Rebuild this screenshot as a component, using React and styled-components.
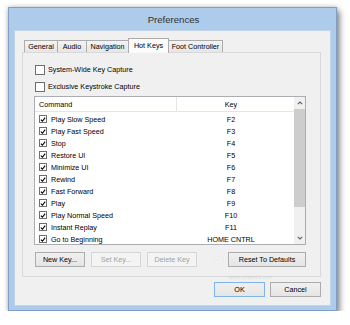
import React from "react";
import styled, { createGlobalStyle, css } from "styled-components";

const GlobalStyle = createGlobalStyle`
  html, body {
    margin: 0;
    padding: 0;
    background: #ffffff;
  }
  body {
    font-family: "Liberation Sans", Arial, sans-serif;
    font-size: 7.2px;
    color: #000;
  }
`;

const Page = styled.div`
  padding: 7px 0 0 8px;
`;

const Window = styled.div`
  position: relative;
  width: 329px;
  height: 304px;
  box-sizing: border-box;
  background: #adcbeb;
  border: 1px solid #7f9fc6;
  box-shadow: 0 0 5px rgba(0, 0, 0, 0.25), 3px 4px 6px rgba(0, 0, 0, 0.4);
  display: flex;
  flex-direction: column;
`;

const TitleBar = styled.div`
  height: 22px;
  display: flex;
  align-items: center;
  justify-content: center;
  font-size: 9.6px;
  color: #333;
  padding-left: 2px;
`;

const Client = styled.div`
  margin: 0 5px;
  height: 276px;
  box-sizing: border-box;
  background: #f0f0f0;
  border: 1px solid #c3d4e8;
  padding: 7px 9px 0 7px;
  display: flex;
  flex-direction: column;
`;

const TabStrip = styled.div`
  display: flex;
  align-items: flex-end;
  height: 14px;
  padding-left: 2px;
  position: relative;
  z-index: 1;
`;

const Tab = styled.div`
  width: ${p => p.$w}px;
  height: ${p => (p.$active ? 15 : 12)}px;
  margin-bottom: ${p => (p.$active ? -1 : 0)}px;
  margin-left: -1px;
  &:first-child {
    margin-left: 0;
  }
  box-sizing: border-box;
  border: 1px solid #acacac;
  border-bottom: none;
  display: flex;
  align-items: center;
  justify-content: center;
  padding-bottom: ${p => (p.$active ? 2 : 0)}px;
  background: ${p => (p.$active ? "#fbfbfb" : "linear-gradient(#f3f3f3, #e6e6e6)")};
  position: relative;
  z-index: ${p => (p.$active ? 2 : 1)};
`;

const Panel = styled.div`
  height: 225px;
  box-sizing: border-box;
  border: 1px solid #d9d9d9;
  background: #f0f0f0;
  padding: 8px 14px 0 11px;
  display: flex;
  flex-direction: column;
`;

const CheckRow = styled.label`
  height: 17px;
  display: flex;
  align-items: center;
  gap: 3px;
  padding-left: 1px;
`;

const Box = styled.span`
  width: ${p => p.$size}px;
  height: ${p => p.$size}px;
  box-sizing: border-box;
  border: 1px solid #6f6f6f;
  background: #fff;
  display: inline-flex;
  align-items: center;
  justify-content: center;
  flex: none;
`;

const ListView = styled.div`
  margin-top: 1px;
  height: 149px;
  box-sizing: border-box;
  border: 1px solid #abadb3;
  background: #fff;
  display: flex;
`;

const ListBody = styled.div`
  flex: 1;
  display: flex;
  flex-direction: column;
  overflow: hidden;
`;

const Header = styled.div`
  height: 15px;
  flex: none;
  display: flex;
  box-sizing: border-box;
  border-bottom: 1px solid #e5e5e5;
`;

const cmdCol = css`
  width: 142px;
  box-sizing: border-box;
  padding-left: 4px;
  display: flex;
  align-items: center;
`;

const keyCol = css`
  width: 108px;
  display: flex;
  align-items: center;
  justify-content: center;
`;

const HeadCmd = styled.div`
  ${cmdCol};
  border-right: 1px solid #e5e5e5;
`;

const HeadKey = styled.div`
  ${keyCol};
`;

const Rows = styled.div`
  padding-top: 1px;
`;

const Row = styled.div`
  height: 12px;
  display: flex;
  align-items: center;
`;

const CmdCell = styled.div`
  ${cmdCol};
  gap: 4px;
`;

const KeyCell = styled.div`
  ${keyCol};
`;

const PeekRow = styled.div`
  height: 2px;
  padding-left: 4px;
  display: flex;
  align-items: flex-start;
`;

const PeekBox = styled.span`
  width: 8px;
  height: 2px;
  box-sizing: border-box;
  border: 1px solid #6f6f6f;
  border-bottom: none;
`;

const ScrollBar = styled.div`
  width: 11px;
  flex: none;
  background: #f0f0f0;
  display: flex;
  flex-direction: column;
`;

const ScrollBtn = styled.div`
  height: 12px;
  display: flex;
  align-items: center;
  justify-content: center;
`;

const Thumb = styled.div`
  height: 98px;
  background: #cdcdcd;
`;

const Track = styled.div`
  flex: 1;
`;

const ButtonRow = styled.div`
  margin-top: 7px;
  display: flex;
  gap: 6px;
  padding-left: 1px;
  position: relative;
  z-index: 2;
`;

const Button = styled.button`
  width: ${p => p.$w || 50}px;
  height: 15px;
  box-sizing: border-box;
  padding: 0;
  font-family: inherit;
  font-size: 7.2px;
  line-height: 1;
  color: ${p => (p.disabled ? "#a0a0a0" : "#000")};
  border: 1px solid ${p => (p.disabled ? "#d5d5d5" : p.$default ? "#7eb4ea" : "#acacac")};
  background: ${p => (p.disabled ? "#f4f4f4" : "linear-gradient(#f0f0f0, #e5e5e5)")};
  margin-left: ${p => (p.$push ? "auto" : "0")};
`;

const Footer = styled.div`
  margin-top: 5px;
  display: flex;
  justify-content: flex-end;
  gap: 5px;
  position: relative;
  z-index: 2;
`;

const Watermark = styled.div`
  position: absolute;
  z-index: 1;
  left: 205px;
  top: 244px;
  font-size: 12px;
  font-weight: bold;
  letter-spacing: 1px;
  color: rgba(255, 255, 255, 0.75);
  text-shadow: 0 0 1px rgba(0, 0, 0, 0.12);
  pointer-events: none;
`;

const WatermarkUrl = styled.div`
  position: absolute;
  z-index: 1;
  left: 220px;
  top: 266px;
  font-size: 5px;
  color: rgba(0, 0, 0, 0.12);
  pointer-events: none;
`;

const Check = () => (
  <svg width="7" height="7" viewBox="0 0 8 8">
    <path d="M1.2 4.2 L3.2 6.3 L6.9 1.4" fill="none" stroke="#000" strokeWidth="1.5" />
  </svg>
);

const Chevron = ({ down }) => (
  <svg width="6" height="4" viewBox="0 0 6 4">
    <path
      d={down ? "M0.8 0.8 L3 3 L5.2 0.8" : "M0.8 3.2 L3 1 L5.2 3.2"}
      fill="none"
      stroke="#606060"
      strokeWidth="1.1"
    />
  </svg>
);

const tabs = [
  { label: "General", w: 34 },
  { label: "Audio", w: 30 },
  { label: "Navigation", w: 43 },
  { label: "Hot Keys", w: 41, active: true },
  { label: "Foot Controller", w: 55 },
];

const keys = [
  ["Play Slow Speed", "F2"],
  ["Play Fast Speed", "F3"],
  ["Stop", "F4"],
  ["Restore UI", "F5"],
  ["Minimize UI", "F6"],
  ["Rewind", "F7"],
  ["Fast Forward", "F8"],
  ["Play", "F9"],
  ["Play Normal Speed", "F10"],
  ["Instant Replay", "F11"],
  ["Go to Beginning", "HOME CNTRL"],
];

export default function App() {
  return (
    <Page>
      <GlobalStyle />
      <Window>
        <TitleBar>Preferences</TitleBar>
        <Client>
          <TabStrip>
            {tabs.map(t => (
              <Tab key={t.label} $w={t.w} $active={t.active}>
                {t.label}
              </Tab>
            ))}
          </TabStrip>
          <Panel>
            <CheckRow>
              <Box $size={10} />
              System-Wide Key Capture
            </CheckRow>
            <CheckRow>
              <Box $size={10} />
              Exclusive Keystroke Capture
            </CheckRow>
            <ListView>
              <ListBody>
                <Header>
                  <HeadCmd>Command</HeadCmd>
                  <HeadKey>Key</HeadKey>
                </Header>
                <Rows>
                  {keys.map(([cmd, key]) => (
                    <Row key={cmd}>
                      <CmdCell>
                        <Box $size={8}>
                          <Check />
                        </Box>
                        {cmd}
                      </CmdCell>
                      <KeyCell>{key}</KeyCell>
                    </Row>
                  ))}
                  <PeekRow>
                    <PeekBox />
                  </PeekRow>
                </Rows>
              </ListBody>
              <ScrollBar>
                <ScrollBtn>
                  <Chevron />
                </ScrollBtn>
                <Thumb />
                <Track />
                <ScrollBtn>
                  <Chevron down />
                </ScrollBtn>
              </ScrollBar>
            </ListView>
            <ButtonRow>
              <Button>New Key...</Button>
              <Button disabled>Set Key...</Button>
              <Button disabled>Delete Key</Button>
              <Button $w={78} $push>
                Reset To Defaults
              </Button>
            </ButtonRow>
          </Panel>
          <Footer>
            <Button $w={51} $default>
              OK
            </Button>
            <Button $w={51}>Cancel</Button>
          </Footer>
        </Client>
        <Watermark>SOFTPEDIA</Watermark>
        <WatermarkUrl>www.softpedia.com</WatermarkUrl>
      </Window>
    </Page>
  );
}
